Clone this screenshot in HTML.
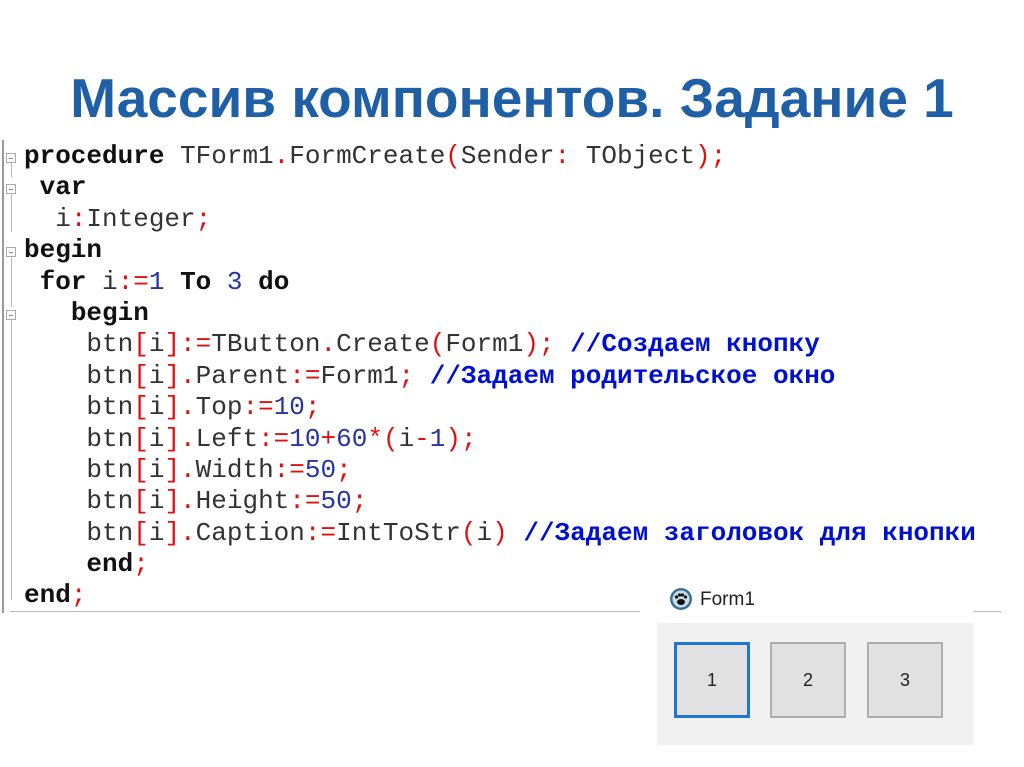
<!DOCTYPE html>
<html><head><meta charset="utf-8"><style>
body{margin:0;width:1024px;height:767px;background:#fff;position:relative;overflow:hidden}
h1{position:absolute;left:0;width:1024px;top:66px;margin:0;text-align:center;font:bold 55px "Liberation Sans",sans-serif;color:#1f5fa5;line-height:64px}
.code{position:absolute;left:24px;top:141px;font-family:"Liberation Mono",monospace;font-size:26px;line-height:31.4px;color:#333}
.code div{height:31.4px;white-space:pre}
b{color:#111}
.p{color:#e01010}
.n{color:#2535a5}
.c{color:#0010d0;font-weight:bold}
.vl{position:absolute;left:2px;top:140px;width:2px;height:473px;background:#999}
.hl{position:absolute;top:611px;height:1px;background:#bbb}
.g{position:absolute;left:6px;width:10px;height:10px;border:1px solid #aaa;box-sizing:border-box}
.g:after{content:"";position:absolute;left:2px;top:4px;width:4px;height:1px;background:#888}
.gl{position:absolute;left:11px;width:1px;background:#bbb}
.panel{position:absolute;left:657px;top:623px;width:316px;height:122px;background:#f0f0f0}
.btn{position:absolute;top:642px;width:76px;height:76px;background:#e1e1e1;border:2px solid #adadad;box-sizing:border-box;font:18px "Liberation Sans",sans-serif;color:#222;display:flex;align-items:center;justify-content:center}
</style></head><body>
<h1>Массив компонентов. Задание 1</h1>
<div class="vl"></div>
<div class="hl" style="left:10px;width:630px"></div>
<div class="hl" style="left:973px;width:28px"></div>
<div class="g" style="top:153px"></div><div class="gl" style="top:163px;height:14px"></div>
<div class="g" style="top:184px"></div><div class="gl" style="top:194px;height:38px"></div>
<div class="g" style="top:247px"></div><div class="gl" style="top:257px;height:50px"></div>
<div class="g" style="top:310px"></div><div class="gl" style="top:320px;height:280px"></div>
<div class="code"><div><b>procedure</b> TForm1<span class="p">.</span>FormCreate<span class="p">(</span>Sender<span class="p">:</span> TObject<span class="p">);</span></div><div> <b>var</b></div><div>  i<span class="p">:</span>Integer<span class="p">;</span></div><div><b>begin</b></div><div> <b>for</b> i<span class="p">:=</span><span class="n">1</span> <b>To</b> <span class="n">3</span> <b>do</b></div><div>   <b>begin</b></div><div>    btn<span class="p">[</span>i<span class="p">]:=</span>TButton<span class="p">.</span>Create<span class="p">(</span>Form1<span class="p">);</span> <span class="c">//Создаем кнопку</span></div><div>    btn<span class="p">[</span>i<span class="p">].</span>Parent<span class="p">:=</span>Form1<span class="p">;</span> <span class="c">//Задаем родительское окно</span></div><div>    btn<span class="p">[</span>i<span class="p">].</span>Top<span class="p">:=</span><span class="n">10</span><span class="p">;</span></div><div>    btn<span class="p">[</span>i<span class="p">].</span>Left<span class="p">:=</span><span class="n">10</span><span class="p">+</span><span class="n">60</span><span class="p">*(</span>i<span class="p">-</span><span class="n">1</span><span class="p">);</span></div><div>    btn<span class="p">[</span>i<span class="p">].</span>Width<span class="p">:=</span><span class="n">50</span><span class="p">;</span></div><div>    btn<span class="p">[</span>i<span class="p">].</span>Height<span class="p">:=</span><span class="n">50</span><span class="p">;</span></div><div>    btn<span class="p">[</span>i<span class="p">].</span>Caption<span class="p">:=</span>IntToStr<span class="p">(</span>i<span class="p">)</span> <span class="c">//Задаем заголовок для кнопки</span></div><div>    <b>end</b><span class="p">;</span></div><div><b>end</b><span class="p">;</span></div></div>
<svg style="position:absolute;left:669px;top:587px" width="24" height="24" viewBox="0 0 24 24"><circle cx="12" cy="12" r="11" fill="#3a6f96"/><circle cx="12" cy="12" r="8.5" fill="#c9dde9"/><ellipse cx="12" cy="15" rx="4" ry="3" fill="#111"/><circle cx="7.5" cy="10" r="1.6" fill="#111"/><circle cx="10.5" cy="8" r="1.6" fill="#111"/><circle cx="13.5" cy="8" r="1.6" fill="#111"/><circle cx="16.5" cy="10" r="1.6" fill="#111"/></svg>
<div style="position:absolute;left:700px;top:589px;font:19px 'Liberation Sans',sans-serif;color:#222">Form1</div>
<div class="panel"></div>
<div class="btn" style="left:674px;border:3px solid #1a78d4">1</div>
<div class="btn" style="left:770px">2</div>
<div class="btn" style="left:867px">3</div>
</body></html>
